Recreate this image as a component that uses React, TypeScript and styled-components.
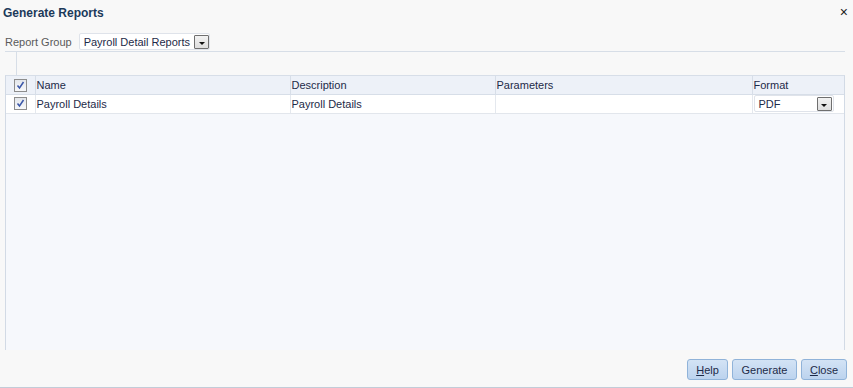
import React from 'react'
import styled, { createGlobalStyle } from 'styled-components'

const GlobalStyle = createGlobalStyle`
  html, body {
    margin: 0;
    padding: 0;
    background: #f8f8f8;
    font-family: 'Liberation Sans', Arial, sans-serif;
    font-size: 11px;
    color: #1d2a48;
  }
`

const Dialog = styled.div`
  width: 853px;
  height: 388px;
  box-sizing: border-box;
  display: flex;
  flex-direction: column;
  border-bottom: 1px solid #c3ccd8;
`

const TitleBar = styled.div`
  height: 26px;
  display: flex;
  align-items: center;
  justify-content: space-between;
  padding: 0 5px 0 3px;

  .title {
    font-weight: bold;
    font-size: 12px;
    color: #1c3a5a;
  }
`

const CloseX = styled.span`
  font-size: 14px;
  line-height: 1;
  color: #222;
  margin-top: -2px;
`

const GroupRow = styled.div`
  display: flex;
  align-items: center;
  gap: 7px;
  margin: 7px 8px 0 5px;
  height: 17px;
  padding-bottom: 1px;
  border-bottom: 1px solid #d7dee7;

  .label {
    color: #5a5a5a;
  }
`

const Select = styled.div<{ width: number }>`
  width: ${(p) => p.width}px;
  height: 17px;
  flex-shrink: 0;
  box-sizing: border-box;
  display: flex;
  align-items: center;
  justify-content: space-between;
  white-space: nowrap;
  overflow: hidden;
  background: #fff;
  border: 1px solid #dfe3ea;
  border-radius: 2px;
  padding: 0 1px 0 4px;
  color: #1d2a48;
`

const DropButton = styled.span`
  width: 15px;
  height: 14px;
  flex-shrink: 0;
  margin-left: 4px;
  box-sizing: border-box;
  border: 1px solid #6f6f6f;
  border-radius: 1px;
  background: linear-gradient(#f2f2f2, #dedede);
  display: flex;
  align-items: center;
  justify-content: center;

  &::after {
    content: '';
    border-left: 3px solid transparent;
    border-right: 3px solid transparent;
    border-top: 3px solid #111;
    margin-top: 3px;
  }
`

const Toolbar = styled.div`
  height: 23px;
  margin-left: 16px;
  border-left: 1px solid #d7dee7;
`

const TablePanel = styled.div`
  flex: 1;
  margin: 0 8px 0 5px;
  background: #f6f8fc;
  border-left: 1px solid #d2dae5;
  border-right: 1px solid #d2dae5;
  border-top: 1px solid #d7dee8;
`

const Table = styled.table`
  width: 100%;
  border-collapse: collapse;
  table-layout: fixed;
`

const Th = styled.th<{ width?: number; center?: boolean }>`
  width: ${(p) => (p.width ? `${p.width}px` : 'auto')};
  box-sizing: border-box;
  height: 18px;
  padding: 0 1px;
  text-align: ${(p) => (p.center ? 'center' : 'left')};
  font-weight: normal;
  background: #edf1f8;
  border-right: 1px solid #d7dee8;
  border-bottom: 1px solid #d7dee8;
  color: #1d2a48;

  &:last-child {
    border-right: none;
  }
`

const Td = styled.td<{ center?: boolean }>`
  height: 19px;
  box-sizing: border-box;
  padding: 0 1px;
  background: #fff;
  border-right: 1px solid #e4e8ee;
  border-bottom: 1px solid #e2e6ec;
  text-align: ${(p) => (p.center ? 'center' : 'left')};
  white-space: nowrap;

  &:last-child {
    border-right: none;
  }
`

const Check = styled.span`
  display: inline-flex;
  width: 13px;
  height: 13px;
  box-sizing: border-box;
  border: 1px solid #8d8d8d;
  background: linear-gradient(#e3e6eb, #f7f8fa);
  align-items: center;
  justify-content: center;
  vertical-align: middle;
`

const Footer = styled.div`
  height: 37px;
  display: flex;
  align-items: center;
  justify-content: flex-end;
  gap: 4px;
  padding-right: 6px;
  padding-top: 2px;
  box-sizing: border-box;
`

const Button = styled.button<{ width: number }>`
  width: ${(p) => p.width}px;
  height: 21px;
  font-family: 'Liberation Sans', Arial, sans-serif;
  font-size: 11px;
  color: #1d2a48;
  background: linear-gradient(#d3e3f5, #bcd3ee);
  border: 1px solid #90b3d9;
  border-radius: 3px;
  padding: 0;
  cursor: pointer;

  u {
    text-decoration: underline;
  }
`

const CheckMark = () => (
  <svg width="9" height="9" viewBox="0 0 9 9">
    <path d="M1.5 4.5 L3.5 7 L7.5 1" fill="none" stroke="#3a56a8" strokeWidth="1.5" />
  </svg>
)

export default function App() {
  return (
    <>
      <GlobalStyle />
      <Dialog>
        <TitleBar>
          <span className="title">Generate Reports</span>
          <CloseX>×</CloseX>
        </TitleBar>
        <GroupRow>
          <span className="label">Report Group</span>
          <Select width={131}>
            Payroll Detail Reports
            <DropButton />
          </Select>
        </GroupRow>
        <Toolbar />
        <TablePanel>
          <Table>
            <thead>
              <tr>
                <Th width={29} center>
                  <Check>
                    <CheckMark />
                  </Check>
                </Th>
                <Th width={255}>Name</Th>
                <Th width={205}>Description</Th>
                <Th width={257}>Parameters</Th>
                <Th>Format</Th>
              </tr>
            </thead>
            <tbody>
              <tr>
                <Td center>
                  <Check>
                    <CheckMark />
                  </Check>
                </Td>
                <Td>Payroll Details</Td>
                <Td>Payroll Details</Td>
                <Td />
                <Td>
                  <Select width={80}>
                    PDF
                    <DropButton />
                  </Select>
                </Td>
              </tr>
            </tbody>
          </Table>
        </TablePanel>
        <Footer>
          <Button width={41}>
            <u>H</u>elp
          </Button>
          <Button width={65}>Generate</Button>
          <Button width={46}>
            <u>C</u>lose
          </Button>
        </Footer>
      </Dialog>
    </>
  )
}
